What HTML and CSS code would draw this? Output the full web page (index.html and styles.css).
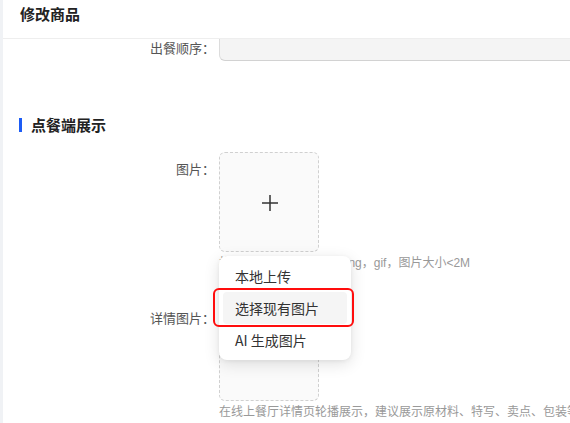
FILE: index.html
```html
<!DOCTYPE html>
<html lang="zh-CN">
<head>
<meta charset="utf-8">
<title>修改商品</title>
<link rel="stylesheet" href="styles.css">
</head>
<body>
<div class="panel">
  <header class="header">修改商品</header>
  <main class="content">
    <div class="row row-first">
      <label class="label label-inline">出餐顺序：</label>
      <div class="input"></div>
    </div>

    <h2 class="section-title">点餐端展示</h2>

    <div class="row row-upload">
      <label class="label">图片：</label>
      <div class="control">
        <div class="upload-wrap">
          <div class="upload">
            <svg class="plus" width="18" height="18" viewBox="0 0 18 18"><path d="M9 1v16M1 9h16" stroke="#333" stroke-width="1.5" fill="none"/></svg>
          </div>
          <ul class="menu">
            <li class="menu-item">本地上传</li>
            <li class="menu-item active">选择现有图片</li>
            <li class="menu-item">AI 生成图片</li>
          </ul>
          <div class="highlight"></div>
        </div>
        <p class="hint">格式支持：jpg，jpeg，png，gif，图片大小&lt;2M</p>
      </div>
    </div>

    <div class="row row-upload row-detail">
      <label class="label">详情图片：</label>
      <div class="control">
        <div class="upload"></div>
        <p class="hint">在线上餐厅详情页轮播展示，建议展示原材料、特写、卖点、包装等</p>
      </div>
    </div>
  </main>
</div>
</body>
</html>
```

FILE: styles.css
```css
* { box-sizing: border-box; }
html, body { margin: 0; padding: 0; }
body {
  width: 570px;
  height: 423px;
  overflow: hidden;
  background: #f0f2f5;
  font-family: "Noto Sans CJK SC", "Noto Sans", sans-serif;
  color: #333;
}
.panel {
  margin-left: 3px;
  height: 423px;
  background: #fff;
  display: flex;
  flex-direction: column;
}
.header {
  height: 39px;
  flex: none;
  border-bottom: 1px solid #eeeeee;
  padding-left: 17px;
  font-size: 15px;
  font-weight: 600;
  line-height: 28px;
  color: #222;
}
.content {
  flex: 1;
  overflow: hidden;
}
.row {
  display: flex;
  align-items: flex-start;
}
.label {
  width: 216px;
  flex: none;
  text-align: right;
  font-size: 13px;
  color: #555;
  line-height: 20px;
  padding-top: 7px;
  padding-right: 4px;
}
.label-inline {
  padding-top: 0;
  line-height: 17px;
}
.input {
  flex: 1;
  height: 22px;
  background: #f4f4f4;
  border-left: 1px solid #dcdcdc;
  border-bottom: 1px solid #d2d2d2;
  border-bottom-left-radius: 6px;
}
.section-title {
  margin: 57px 0 0 16px;
  height: 14px;
  border-left: 3px solid #1d5cf5;
  padding-left: 9px;
  font-size: 15px;
  font-weight: 600;
  line-height: 14px;
  color: #222;
}
.row-upload { margin-top: 20px; }
.row-detail { margin-top: 29px; }
.control {
  flex: 1;
  min-width: 0;
}
.upload-wrap { position: relative; width: 100px; }
.upload {
  width: 100px;
  height: 100px;
  border: 1px dashed #d0d0d0;
  border-radius: 6px;
  background: #fafafa;
  display: flex;
  align-items: center;
  justify-content: center;
}
.plus { display: block; margin: 1px 0 0 1px; }
.hint {
  margin: 2px 0 0;
  font-family: "Liberation Sans", "Noto Sans CJK SC", sans-serif;
  font-size: 12px;
  line-height: 18px;
  color: #999;
  white-space: nowrap;
}
.menu {
  position: absolute;
  left: 0;
  top: 104px;
  width: 132px;
  margin: 0;
  padding: 4px;
  list-style: none;
  background: #fff;
  border-radius: 8px;
  box-shadow: 0 4px 16px rgba(0, 0, 0, 0.12), 0 1px 4px rgba(0, 0, 0, 0.06);
  z-index: 2;
}
.menu-item {
  height: 32px;
  line-height: 32px;
  padding-left: 12px;
  font-size: 14px;
  color: #333;
  border-radius: 4px;
}
.menu-item.active { background: #f5f5f5; }
.highlight {
  position: absolute;
  left: -6px;
  top: 136px;
  width: 141px;
  height: 39px;
  border: 2px solid #ff0d0d;
  border-radius: 6px;
  z-index: 3;
}
```
